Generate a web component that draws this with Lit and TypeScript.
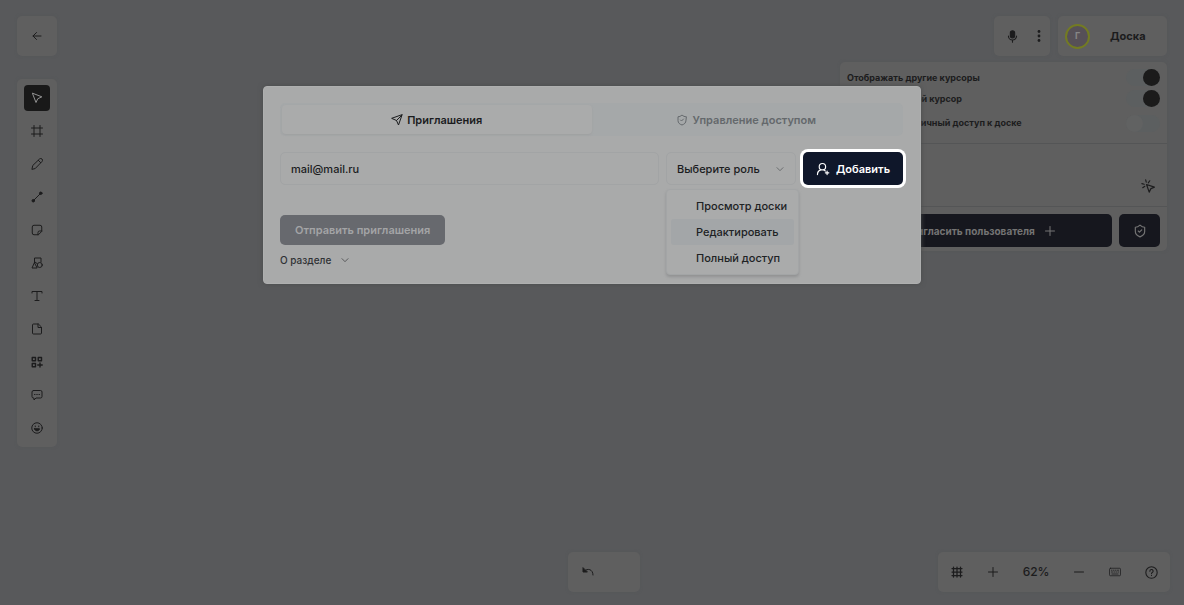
import { LitElement, html, css, svg, nothing } from "lit";
import { customElement, property, state } from "lit/decorators.js";

const icons: Record<string, unknown> = {
  back: svg`<path d="M20 12H4M11 5l-7 7 7 7"/>`,
  cursor: svg`<path d="M3 3l7 18 3.500-7.500L21 10z"/>`,
  frame: svg`<path d="M6 1v22M18 1v22M1 6h22M1 18h22"/>`,
  pencil: svg`<path d="M2 22l1.500-7L17 2a2.800 2.800 0 0 1 5 5L9 20.500zM14.500 4.500l5 5"/>`,
  line: svg`<path d="M6.500 17.500l11-11"/><circle cx="4.500" cy="19.500" r="2.500" fill="currentColor"/><circle cx="19.500" cy="4.500" r="2.500" fill="currentColor"/>`,
  sticker: svg`<path d="M21.500 14V6a3.500 3.500 0 0 0-3.500-3.500H6A3.500 3.500 0 0 0 2.500 6v12A3.500 3.500 0 0 0 6 21.500h8zM21.500 14H17a3 3 0 0 0-3 3v4.500"/>`,
  shapes: svg`<path d="M7 12V2h13v8"/><path d="M6.500 12L2 22h9.500z"/><circle cx="17.500" cy="16" r="5"/><path d="M8 10l4 3"/>`,
  text: svg`<path d="M2 6V3h20v3M12 3v18M8 21h8"/>`,
  file: svg`<path d="M14 2H5a2 2 0 0 0-2 2v16a2 2 0 0 0 2 2h14a2 2 0 0 0 2-2V9zM14 2v7h7"/>`,
  blocks: svg`<g stroke-width="2.800"><path d="M2.500 3h6.500v6.500H2.500zM14.500 3H21v6.500h-6.500zM2.500 15H9v6.500H2.500zM13.500 18h9M18 14v8"/></g>`,
  comment: svg`<path d="M5 3h14a3 3 0 0 1 3 3v9a3 3 0 0 1-3 3H10l-4 4v-4H5a3 3 0 0 1-3-3V6a3 3 0 0 1 3-3zM7 11h1M11.500 11h1M16 11h1"/>`,
  smile: svg`<circle cx="12" cy="12" r="10.500"/><path d="M7 13.500h10c-.5 5.500-9.500 5.500-10 0z" fill="currentColor"/><path d="M8.500 8v1.500M15.500 8v1.500"/>`,
  mic: svg`<rect x="8" y="1.500" width="8" height="13" rx="4" fill="currentColor"/><path d="M4.500 11a7.500 7.500 0 0 0 15 0M12 18.500v4"/>`,
  dots: svg`<g fill="currentColor" stroke="none"><circle cx="12" cy="3" r="2.800"/><circle cx="12" cy="12" r="2.800"/><circle cx="12" cy="21" r="2.800"/></g>`,
  click: svg`<path d="M9.500 9.500l4.500 13 3-6 6-2.500zM8 1.500l1 4M1.500 8l4 1M15 3l-2.500 3.500M3 15l3.500-2.500"/>`,
  plus: svg`<path d="M12 3v18M3 12h18"/>`,
  minus: svg`<path d="M3 12h18"/>`,
  shield: svg`<path d="M20 13c0 5-3.500 7.500-8 9-4.500-1.500-8-4-8-9V5.500c3 0 5.500-1.200 8-3.500 2.500 2.300 5 3.500 8 3.500zM9 12l2 2 4-4"/>`,
  send: svg`<path d="M22 2L15 22l-4-9-9-4zM22 2L11 13"/>`,
  chevron: svg`<path d="M3 8l9 9 9-9"/>`,
  user: svg`<circle cx="11" cy="8" r="5.500"/><path d="M2.500 21.500c0-5 2.500-7 6-8M13 13.500l3 2M19 15.500v6M16 18.500h6"/>`,
  grid: svg`<g stroke-width="2.500"><path d="M5 2v20M12 2v20M19 2v20M2 5h20M2 12h20M2 19h20"/></g>`,
  keyboard: svg`<g stroke-width="1.500"><rect x="1" y="4.500" width="22" height="15" rx="2"/><path d="M5 8.500h1M9 8.500h1M13 8.500h1M17 8.500h2M5 12h2M10 12h1M14 12h1M18 12h1M6 16h12"/></g>`,
  help: svg`<circle cx="12" cy="12" r="10.500"/><path d="M9 9.500a3 3 0 1 1 4.500 2.500c-1 .6-1.500 1-1.500 2M12 17v.5"/>`,
  undo: svg`<path d="M2 4v8h8z" fill="currentColor"/><path d="M5 10c6-6 17-4 17 8"/>`,
};

@customElement("ui-icon")
class UiIcon extends LitElement {
  static styles = css`
    :host { display: inline-flex; flex: none; width: 12px; height: 12px; }
    svg { width: 100%; height: 100%; fill: none; stroke: currentColor; stroke-width: 2; stroke-linejoin: round; stroke-linecap: round; }
  `;
  @property() name = "";
  render() {
    return html`<svg viewBox="0 0 24 24" aria-hidden="true">${icons[this.name] ?? nothing}</svg>`;
  }
}

@customElement("app-root")
class AppRoot extends LitElement {
  static styles = css`
    :host {
      display: block;
      position: relative;
      min-height: 100vh;
      background: #58595b;
      color: #1c1c1d;
      font: 500 11px/16px Inter, "Noto Sans", sans-serif;
    }
    * { box-sizing: border-box; }
    button, input, select { font: inherit; color: inherit; margin: 0; padding: 0; border: 0; background: none; }
    button { display: grid; place-items: center; }
    .board { display: flex; flex-direction: column; justify-content: space-between; min-height: 100vh; padding: 16px 0 13px; }
    .top { display: flex; justify-content: space-between; align-items: flex-start; padding: 0 17px; }
    .card { background: #5f5f5f; border-radius: 5px; box-shadow: 0 0 3px #54565899; }
    .left { display: flex; flex-direction: column; gap: 23px; }
    .back { width: 40px; height: 40px; }
    .tools { display: flex; flex-direction: column; align-items: center; gap: 7px; width: 40px; padding: 6px 0; }
    .tool { width: 26px; height: 26px; border-radius: 4px; }
    .tool.active { background: #191919; color: #929292; }
    .right { display: flex; flex-direction: column; align-items: flex-end; gap: 6px; }
    .head { display: flex; gap: 8px; }
    .media { display: flex; align-items: center; gap: 14px; height: 40px; width: 56px; padding-left: 12px; }
    .owner { display: flex; align-items: center; gap: 20px; height: 40px; width: 109px; padding-left: 7px; font-weight: 700; }
    .avatar { width: 25px; height: 25px; border-radius: 50%; border: 2px solid #737b22; background: #565057; color: #868686; display: grid; place-items: center; font-size: 9px; }
    .panel { width: 327px; }
    .switches { display: flex; flex-direction: column; gap: 4px; padding: 7px 7px 8px; border-bottom: 1px solid #545556; }
    .row { display: flex; align-items: center; justify-content: space-between; font-size: 9px; font-weight: 700; height: 17px; }
    .row:last-child { height: 24px; }
    .switch { appearance: none; display: flex; width: 34px; height: 17px; border-radius: 9px; background: #5c5f60; }
    .switch::before { content: ""; width: 17px; height: 17px; border-radius: 50%; background: #616262; }
    .switch:checked { justify-content: flex-end; }
    .switch:checked::before { background: #1b1b1b; }
    .people { display: flex; justify-content: flex-end; align-items: flex-end; height: 63px; padding: 0 12px 13px; border-bottom: 1px solid #545556; }
    .actions { display: flex; gap: 7px; padding: 7px 7px 4px; }
    .dark { display: flex; align-items: center; justify-content: center; gap: 9px; height: 33px; border-radius: 5px; background: #16171e; color: #747474; font-size: 10px; font-weight: 700; }
    .invite { flex: 1; }
    .guard { width: 41px; }
    .bottom { display: grid; grid-template-columns: 1fr auto 1fr; align-items: center; padding: 0 14px 0 38px; }
    .undo { grid-column: 2; display: flex; align-items: center; width: 72px; height: 40px; padding-left: 14px; }
    .zoom { justify-self: end; display: flex; align-items: center; justify-content: space-between; width: 232px; height: 40px; padding: 0 12px 0 13px; font-size: 12px; }
    .overlay { position: absolute; inset: 0; display: flex; justify-content: center; align-items: flex-start; padding: 86px 16px 16px; }
    .dialog { width: 658px; max-width: 100%; padding: 16px 17px 15px 16px; background: #a9aaaa; border-radius: 4px; border: 1px solid #aeafaf; box-shadow: 0 0 5px #4b4c4d; }
    .tabs { display: grid; grid-template-columns: 1fr 1fr; padding: 2px; border-radius: 5px; background: #a5a8a9; }
    .tab { display: flex; align-items: center; justify-content: center; gap: 4px; height: 29px; color: #64686c; border-radius: 4px; font-weight: 600; }
    .tab.on { background: #aaabab; color: #1b1c1e; box-shadow: 0 1px 2px #9fa0a1; }
    .form { display: flex; gap: 7px; margin-top: 16px; }
    .mail, .role { height: 33px; border: 1px solid #a2a4a5; border-radius: 5px; color: #1b1c1e; }
    .mail { flex: 1; min-width: 0; padding: 0 10px; }
    .pick { position: relative; display: flex; align-items: center; width: 130px; }
    .role { appearance: none; width: 100%; padding: 0 28px 0 10px; }
    .arrow { position: absolute; right: 12px; color: #4c4e51; }
    .menu { position: absolute; z-index: 1; top: 37px; left: 0; display: grid; padding: 3px 4px; width: 133px; background: #aaabab; border: 1px solid #a3a5a6; border-radius: 4px; box-shadow: 0 2px 3px #919293; }
    .option { height: 26px; place-items: center start; padding-left: 25px; border-radius: 3px; color: #202224; white-space: nowrap; }
    .option.hover { background: #a3a6a8; }
    .add { display: flex; align-items: center; justify-content: center; gap: 6px; width: 100px; height: 33px; border-radius: 5px; background: #0f172a; color: #fff; font-weight: 600; box-shadow: 0 0 0 3px #fff; }
    .send { height: 30px; padding: 0 15px; margin-top: 30px; border-radius: 5px; background: #67696e; color: #a3a4a6; font-weight: 600; }
    .about { display: flex; align-items: center; gap: 10px; margin-top: 7px; font-size: 10px; color: #303235; }
    .s8 { width: 8px; height: 8px; }
    .s13 { width: 13px; height: 13px; }
    .s14 { width: 14px; height: 14px; }
  `;

  @state() private tool = "cursor";
  @state() private role = "Редактировать";

  private tools = [
    ["cursor", "Выбор"], ["frame", "Фрейм"], ["pencil", "Карандаш"], ["line", "Линия"],
    ["sticker", "Стикер"], ["shapes", "Фигуры"], ["text", "Текст"], ["file", "Файл"],
    ["blocks", "Блоки"], ["comment", "Комментарий"], ["smile", "Реакции"],
  ];
  private roles = ["Просмотр доски", "Редактировать", "Полный доступ"];
  private switches: [string, boolean][] = [
    ["Отображать другие курсоры", true],
    ["Отображать свой курсор", true],
    ["Разрешить публичный доступ к доске", false],
  ];

  render() {
    return html`
      <div class="board">
        <div class="top">
          <div class="left">
            <button class="back card" aria-label="Назад"><ui-icon name="back"></ui-icon></button>
            <nav class="tools card">
              ${this.tools.map(([id, label]) => html`
                <button class="tool ${this.tool === id ? "active" : ""}" aria-label=${label} @click=${() => (this.tool = id)}>
                  <ui-icon name=${id}></ui-icon>
                </button>`)}
            </nav>
          </div>
          <div class="right">
            <div class="head">
              <div class="media card">
                <button aria-label="Микрофон"><ui-icon class="s13" name="mic"></ui-icon></button>
                <button aria-label="Меню"><ui-icon name="dots"></ui-icon></button>
              </div>
              <div class="owner card"><span class="avatar">Г</span><span>Доска</span></div>
            </div>
            <aside class="panel card">
              <div class="switches">
                ${this.switches.map(([label, on]) => html`
                  <label class="row">${label}<input class="switch" type="checkbox" role="switch" .checked=${on}></label>`)}
              </div>
              <div class="people"><button aria-label="Курсоры"><ui-icon class="s14" name="click"></ui-icon></button></div>
              <div class="actions">
                <button class="dark invite">Пригласить пользователя <ui-icon name="plus"></ui-icon></button>
                <button class="dark guard" aria-label="Доступ"><ui-icon class="s14" name="shield"></ui-icon></button>
              </div>
            </aside>
          </div>
        </div>
        <div class="bottom">
          <div class="undo card"><button aria-label="Отменить"><ui-icon name="undo"></ui-icon></button></div>
          <div class="zoom card">
            <button aria-label="Сетка"><ui-icon name="grid"></ui-icon></button>
            <button aria-label="Увеличить"><ui-icon name="plus"></ui-icon></button>
            <span>62%</span>
            <button aria-label="Уменьшить"><ui-icon name="minus"></ui-icon></button>
            <button aria-label="Клавиатура"><ui-icon name="keyboard"></ui-icon></button>
            <button aria-label="Справка"><ui-icon class="s13" name="help"></ui-icon></button>
          </div>
        </div>
      </div>
      <div class="overlay">
        <section class="dialog" role="dialog" aria-label="Приглашения">
          <div class="tabs" role="tablist">
            <button class="tab on" role="tab" aria-selected="true"><ui-icon name="send"></ui-icon>Приглашения</button>
            <button class="tab" role="tab" aria-selected="false"><ui-icon name="shield"></ui-icon>Управление доступом</button>
          </div>
          <div class="form">
            <input class="mail" type="email" aria-label="Почта" value="mail@mail.ru">
            <div class="pick">
              <select class="role" aria-label="Роль">
                <option>Выберите роль</option>
                ${this.roles.map((r) => html`<option>${r}</option>`)}
              </select>
              <ui-icon class="arrow s8" name="chevron"></ui-icon>
              <div class="menu" role="listbox">
                ${this.roles.map((r) => html`
                  <button class="option ${this.role === r ? "hover" : ""}" role="option" @mouseenter=${() => (this.role = r)}>${r}</button>`)}
              </div>
            </div>
            <button class="add"><ui-icon class="s14" name="user"></ui-icon>Добавить</button>
          </div>
          <button class="send">Отправить приглашения</button>
          <button class="about">О разделе <ui-icon class="s8" name="chevron"></ui-icon></button>
        </section>
      </div>
    `;
  }
}
